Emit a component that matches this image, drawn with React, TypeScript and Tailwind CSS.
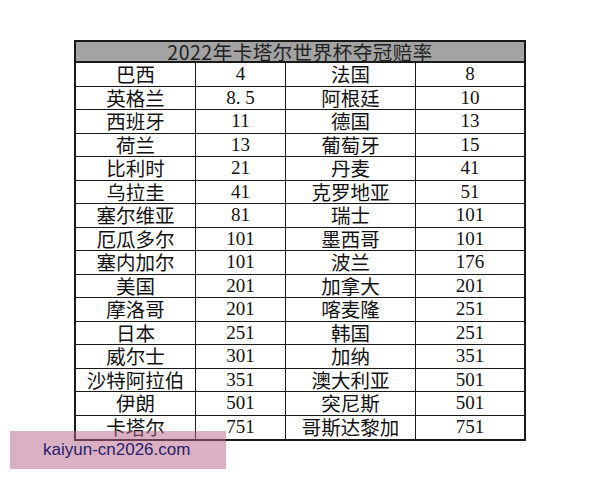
import React from 'react'

// 2022 World Cup winner odds table, as in the screenshot
const rows: [string, string, string, string][] = [
  ['巴西', '4', '法国', '8'],
  ['英格兰', '8. 5', '阿根廷', '10'],
  ['西班牙', '11', '德国', '13'],
  ['荷兰', '13', '葡萄牙', '15'],
  ['比利时', '21', '丹麦', '41'],
  ['乌拉圭', '41', '克罗地亚', '51'],
  ['塞尔维亚', '81', '瑞士', '101'],
  ['厄瓜多尔', '101', '墨西哥', '101'],
  ['塞内加尔', '101', '波兰', '176'],
  ['美国', '201', '加拿大', '201'],
  ['摩洛哥', '201', '喀麦隆', '251'],
  ['日本', '251', '韩国', '251'],
  ['威尔士', '301', '加纳', '351'],
  ['沙特阿拉伯', '351', '澳大利亚', '501'],
  ['伊朗', '501', '突尼斯', '501'],
  ['卡塔尔', '751', '哥斯达黎加', '751'],
]

const cjkCell =
  "flex items-center justify-center border-r border-[#1a1a1a] text-[19.5px] leading-[20px] font-['Noto_Sans_CJK_SC','Noto_Sans',sans-serif]"
const numCell =
  "flex items-center justify-center text-[19px] leading-[20px] font-['Liberation_Serif','Noto_Sans_CJK_SC',serif]"

export default function App() {
  return (
    <div className="relative w-[600px] h-[480px] bg-white overflow-hidden">
      <div className="pt-[40px] pl-[74px]">
        <div className="w-[452px] border-2 border-[#1a1a1a]">
          <div className="h-[21px] bg-[#a3a3a3] border-b-2 border-[#1a1a1a] flex items-center justify-center text-[19.5px] leading-[20px] tracking-[0.5px] text-[#222] font-['Noto_Sans_CJK_SC','Noto_Sans',sans-serif]">
            2022年卡塔尔世界杯夺冠赔率
          </div>
          {rows.map((r, i) => (
            <div
              key={i}
              className={
                'grid grid-cols-[120px_90px_130px_108px] h-[23.5px] text-[#111] ' +
                (i < rows.length - 1 ? 'border-b-[1.5px] border-[#1a1a1a]' : '')
              }
            >
              <div className={cjkCell}>{r[0]}</div>
              <div className={numCell + ' border-r border-[#1a1a1a]'}>{r[1]}</div>
              <div className={cjkCell}>{r[2]}</div>
              <div className={numCell}>{r[3]}</div>
            </div>
          ))}
        </div>
      </div>

      {/* watermark over the table corner */}
      <div className="absolute left-[10px] top-[431px] w-[216px] h-[38px] bg-[rgba(180,100,135,0.5)] flex items-center pl-[33px] text-[17px] text-[#2a1d6b] font-['Liberation_Sans',Arial,sans-serif]">
        kaiyun-cn2026.com
      </div>
    </div>
  )
}
